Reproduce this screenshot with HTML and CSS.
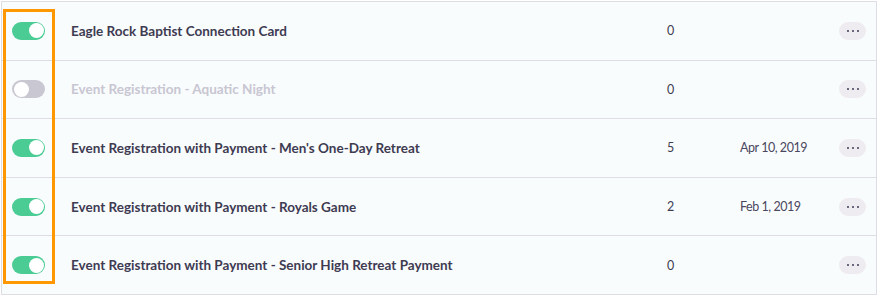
FILE: index.html
```html
<!DOCTYPE html>
<html>
<head>
<meta charset="utf-8">
<link rel="stylesheet" href="styles.css">
</head>
<body>
<div class="page">
  <div class="table">
    <div class="row">
      <div class="cell-toggle"><span class="toggle on"><span class="knob"></span></span></div>
      <div class="name">Eagle Rock Baptist Connection Card</div>
      <div class="count">0</div>
      <div class="date"></div>
      <div class="cell-action"><button class="more"><span></span><span></span><span></span></button></div>
    </div>
    <div class="row">
      <div class="cell-toggle"><span class="toggle off"><span class="knob"></span></span></div>
      <div class="name muted">Event Registration - Aquatic Night</div>
      <div class="count">0</div>
      <div class="date"></div>
      <div class="cell-action"><button class="more"><span></span><span></span><span></span></button></div>
    </div>
    <div class="row">
      <div class="cell-toggle"><span class="toggle on"><span class="knob"></span></span></div>
      <div class="name">Event Registration with Payment - Men's One-Day Retreat</div>
      <div class="count">5</div>
      <div class="date">Apr 10, 2019</div>
      <div class="cell-action"><button class="more"><span></span><span></span><span></span></button></div>
    </div>
    <div class="row">
      <div class="cell-toggle"><span class="toggle on"><span class="knob"></span></span></div>
      <div class="name">Event Registration with Payment - Royals Game</div>
      <div class="count">2</div>
      <div class="date">Feb 1, 2019</div>
      <div class="cell-action"><button class="more"><span></span><span></span><span></span></button></div>
    </div>
    <div class="row">
      <div class="cell-toggle"><span class="toggle on"><span class="knob"></span></span></div>
      <div class="name">Event Registration with Payment - Senior High Retreat Payment</div>
      <div class="count">0</div>
      <div class="date"></div>
      <div class="cell-action"><button class="more"><span></span><span></span><span></span></button></div>
    </div>
    <div class="highlight"></div>
  </div>
</div>
</body>
</html>
```
FILE: styles.css
```css
html, body {
  margin: 0;
  padding: 0;
  background: #ffffff;
}
body {
  font-family: Lato, "Open Sans", sans-serif;
  color: #3b3850;
}
.page {
  padding: 1px 0 0 1px;
}
.table {
  position: relative;
  width: 876px;
  box-sizing: border-box;
  border: 1px solid #dedde4;
  border-bottom: none;
  background: #f9fcfd;
}
.row {
  display: grid;
  grid-template-columns: 69px 1fr 73px 99px 27px;
  align-items: center;
  height: 58.6px;
  box-sizing: border-box;
  border-bottom: 1px solid #dedde4;
  padding-right: 10px;
}
.cell-toggle {
  padding-left: 10px;
  display: flex;
  align-items: center;
}
.toggle {
  width: 33px;
  height: 18px;
  border-radius: 9px;
  display: flex;
  align-items: center;
  box-sizing: border-box;
  padding: 0 1.5px;
}
.toggle.on {
  background: #4bcc95;
  justify-content: flex-end;
}
.toggle.off {
  background: #c9c7d1;
  justify-content: flex-start;
}
.knob {
  width: 15px;
  height: 15px;
  border-radius: 50%;
  background: #ffffff;
}
.name {
  font-weight: 700;
  font-size: 13.5px;
  color: #3e3b52;
  white-space: nowrap;
}
.name.muted {
  color: #c8c6d2;
}
.count {
  font-size: 12.5px;
  color: #3f3c52;
}
.date {
  font-size: 12.5px;
  letter-spacing: -0.45px;
  color: #4a475e;
}
.cell-action {
  display: flex;
  align-items: center;
}
.more {
  width: 27px;
  height: 18px;
  border: none;
  border-radius: 9px;
  background: #eeecf0;
  display: flex;
  align-items: center;
  justify-content: center;
  gap: 3px;
  padding: 0;
}
.more span {
  width: 2px;
  height: 2px;
  border-radius: 50%;
  background: #3f3c55;
}
.highlight {
  position: absolute;
  left: 1px;
  top: 7px;
  width: 52px;
  height: 275px;
  box-sizing: border-box;
  border: 3px solid #ff9800;
  pointer-events: none;
}
```
